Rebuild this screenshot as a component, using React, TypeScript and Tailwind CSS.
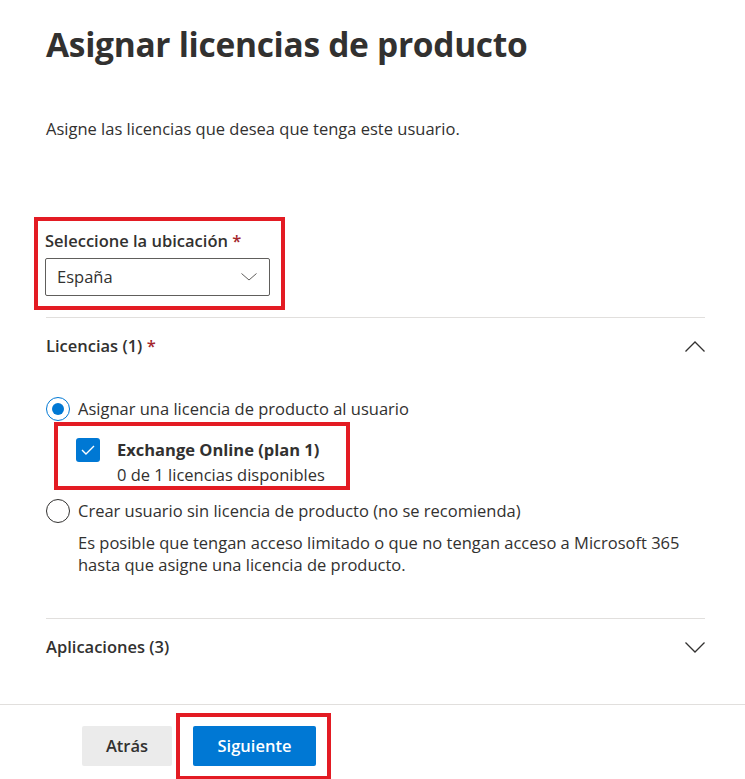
function Chevron({ up }: { up?: boolean }) {
  return (
    <svg width="20" height="11" viewBox="0 0 20 11" fill="none">
      <path d={up ? "M0.5 10.5 L10 1 L19.5 10.5" : "M0.5 0.5 L10 10 L19.5 0.5"} stroke="#323130" strokeWidth="1.3" />
    </svg>
  )
}

export default function App() {
  return (
    <div
      className="w-[745px] h-[779px] bg-white text-[#323130] overflow-hidden flex flex-col"
      style={{ fontFamily: '"Segoe UI", "Open Sans", "Noto Sans", sans-serif' }}
    >
      <div className="pl-[46px] pr-[40px] flex-1">
        <h1 className="mt-[18px] text-[33.5px] leading-[52px] font-bold tracking-[-0.3px]">
          Asignar licencias de producto
        </h1>
        <p className="mt-[48px] text-[16.5px] leading-[22px]">Asigne las licencias que desea que tenga este usuario.</p>

        <div className="mt-[77px] ml-[-12px] w-[251px] h-[93px] border-4 border-[#e31b23] pl-[7px] pt-[9px]">
          <div className="text-[16.5px] font-semibold leading-[22px]">
            Seleccione la ubicación <span className="text-[#a4262c]">*</span>
          </div>
          <div className="mt-[6px] w-[225px] h-[38px] border border-[#605e5c] rounded-[2px] flex items-center justify-between pl-[11px] pr-[12px]">
            <span className="text-[16.5px]">España</span>
            <svg width="16" height="8" viewBox="0 0 16 8" fill="none">
              <path d="M0.5 0.5 L8 7 L15.5 0.5" stroke="#605e5c" strokeWidth="1" />
            </svg>
          </div>
        </div>

        <div className="mt-[7px] border-t border-[#e1dfdd]" />
        <div className="h-[56px] flex items-center justify-between">
          <span className="text-[16.5px] font-semibold">
            Licencias (1) <span className="text-[#a4262c]">*</span>
          </span>
          <Chevron up />
        </div>

        <div className="mt-[22px] flex items-center gap-[8px] h-[26px]">
          <span className="w-[24px] h-[24px] rounded-full border-[1.5px] border-[#0078d4] flex items-center justify-center">
            <span className="w-[12px] h-[12px] rounded-full bg-[#0078d4]" />
          </span>
          <span className="text-[16.5px]">Asignar una licencia de producto al usuario</span>
        </div>

        <div className="ml-[8px] mt-[0px] w-[296px] h-[68px] border-4 border-[#e31b23] flex items-start pl-[18px] pt-[11px] gap-[17px]">
          <span className="mt-[1px] w-[24px] h-[24px] rounded-[3px] bg-[#0078d4] flex items-center justify-center shrink-0">
            <svg width="14" height="10" viewBox="0 0 14 10" fill="none">
              <path d="M1 5 L5 9 L13 1" stroke="white" strokeWidth="1.4" />
            </svg>
          </span>
          <div className="leading-[25px]">
            <div className="text-[16.5px] font-bold">Exchange Online (plan 1)</div>
            <div className="text-[16.5px]">0 de 1 licencias disponibles</div>
          </div>
        </div>

        <div className="mt-[8px] flex items-center gap-[8px] h-[26px]">
          <span className="w-[24px] h-[24px] rounded-full border-[1.5px] border-[#323130]" />
          <span className="text-[16.5px]">Crear usuario sin licencia de producto (no se recomienda)</span>
        </div>
        <p className="ml-[32px] mt-[8px] text-[16.5px] leading-[22px]">
          Es posible que tengan acceso limitado o que no tengan acceso a Microsoft 365
          <br />
          hasta que asigne una licencia de producto.
        </p>

        <div className="mt-[42px] border-t border-[#e1dfdd]" />
        <div className="h-[56px] flex items-center justify-between">
          <span className="text-[16.5px] font-semibold">Aplicaciones (3)</span>
          <Chevron />
        </div>
      </div>

      <div className="border-t border-[#e1dfdd] h-[75px] pl-[82px] pt-[8px] flex items-start">
        <button className="mt-[13px] w-[90px] h-[40px] rounded-[2px] bg-[#ebebeb] text-[16.5px] font-semibold text-[#323130]">
          Atrás
        </button>
        <div className="ml-[4px] w-[155px] h-[67px] border-4 border-[#e31b23] pl-[13px] pt-[9px]">
          <button className="w-[123px] h-[40px] rounded-[2px] bg-[#0078d4] text-[16.5px] font-semibold text-white">
            Siguiente
          </button>
        </div>
      </div>
    </div>
  )
}
